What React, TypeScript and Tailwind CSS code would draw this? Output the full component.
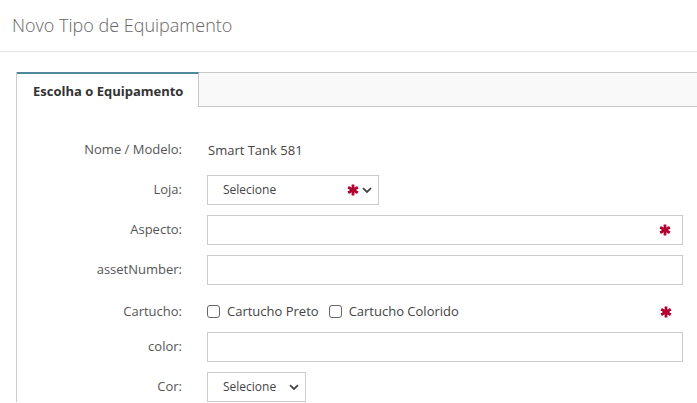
import * as React from "react";

const font = { fontFamily: '"Open Sans", "Liberation Sans", sans-serif' };

function Asterisk() {
  return (
    <svg width="12" height="12" viewBox="0 0 12 12" className="shrink-0">
      <g stroke="#b5002f" strokeWidth="2.8" strokeLinecap="butt">
        <line x1="6" y1="0.5" x2="6" y2="11.5" />
        <line x1="1.2" y1="3.2" x2="10.8" y2="8.8" />
        <line x1="1.2" y1="8.8" x2="10.8" y2="3.2" />
      </g>
    </svg>
  );
}

function Chevron() {
  return (
    <svg width="10" height="7" viewBox="0 0 10 7" className="shrink-0">
      <path d="M1 1.2 L5 5 L9 1.2" fill="none" stroke="#444" strokeWidth="1.8" />
    </svg>
  );
}

function Row({ label, children, h = "h-[30px]" }: { label: string; children: React.ReactNode; h?: string }) {
  return (
    <div className={`flex items-center ${h}`}>
      <div className="w-[165px] shrink-0 text-right text-[13px] text-[#555]">{label}</div>
      <div className="ml-[25px] flex-1 flex items-center">{children}</div>
    </div>
  );
}

function Input({ required }: { required?: boolean }) {
  return (
    <div className="h-[30px] w-[476px] border border-[#ccc] bg-white flex items-center justify-end pr-[11px]">
      {required && <Asterisk />}
    </div>
  );
}

function Checkbox({ label }: { label: string }) {
  return (
    <label className="flex items-center gap-[7px] text-[13px] text-[#444]">
      <span className="w-[13px] h-[13px] border border-[#666] rounded-[3px] bg-white" />
      {label}
    </label>
  );
}

export default function App() {
  return (
    <div className="w-[697px] h-[403px] overflow-hidden bg-white" style={font}>
      <div className="h-[52px] border-b border-[#e5e5e5] flex items-center pl-[12px]">
        <h1 className="text-[18px] font-light text-[#666]">Novo Tipo de Equipamento</h1>
      </div>

      <div className="mt-[20px] ml-[16px] border-l border-[#ccc]">
        <div className="flex h-[35px] bg-[#f9f9f9] border-t border-b border-[#c8c8c8]">
          <div className="w-[182px] -mt-px -mb-px border-t-2 border-t-[#4f8a9c] border-r border-r-[#c8c8c8] bg-white flex items-center pl-[16px] pt-[3px] text-[13px] font-bold text-[#333]">
            Escolha o Equipamento
          </div>
        </div>

        <div className="pt-[28px] flex flex-col gap-[10px]">
          <Row label="Nome / Modelo:">
            <span className="text-[13px] text-[#444] pl-px pt-[2px]">Smart Tank 581</span>
          </Row>
          <Row label="Loja:">
            <div className="h-[30px] w-[172px] border border-[#ccc] flex items-center pl-[15px] pr-[6px]">
              <span className="text-[12px] text-[#444] flex-1">Selecione</span>
              <Asterisk />
              <span className="ml-[3px]"><Chevron /></span>
            </div>
          </Row>
          <Row label="Aspecto:">
            <Input required />
          </Row>
          <Row label="assetNumber:">
            <Input />
          </Row>
          <Row label="Cartucho:" h="h-[27px] pt-[6px]">
            <div className="flex items-center w-[476px] pr-[11px]">
              <Checkbox label="Cartucho Preto" />
              <span className="ml-[10px]">
                <Checkbox label="Cartucho Colorido" />
              </span>
              <span className="ml-auto"><Asterisk /></span>
            </div>
          </Row>
          <Row label="color:">
            <Input />
          </Row>
          <Row label="Cor:">
            <div className="h-[30px] w-[99px] border border-[#ccc] flex items-center pl-[15px] pr-[6px]">
              <span className="text-[12px] text-[#444] flex-1">Selecione</span>
              <Chevron />
            </div>
          </Row>
        </div>
      </div>
    </div>
  );
}
